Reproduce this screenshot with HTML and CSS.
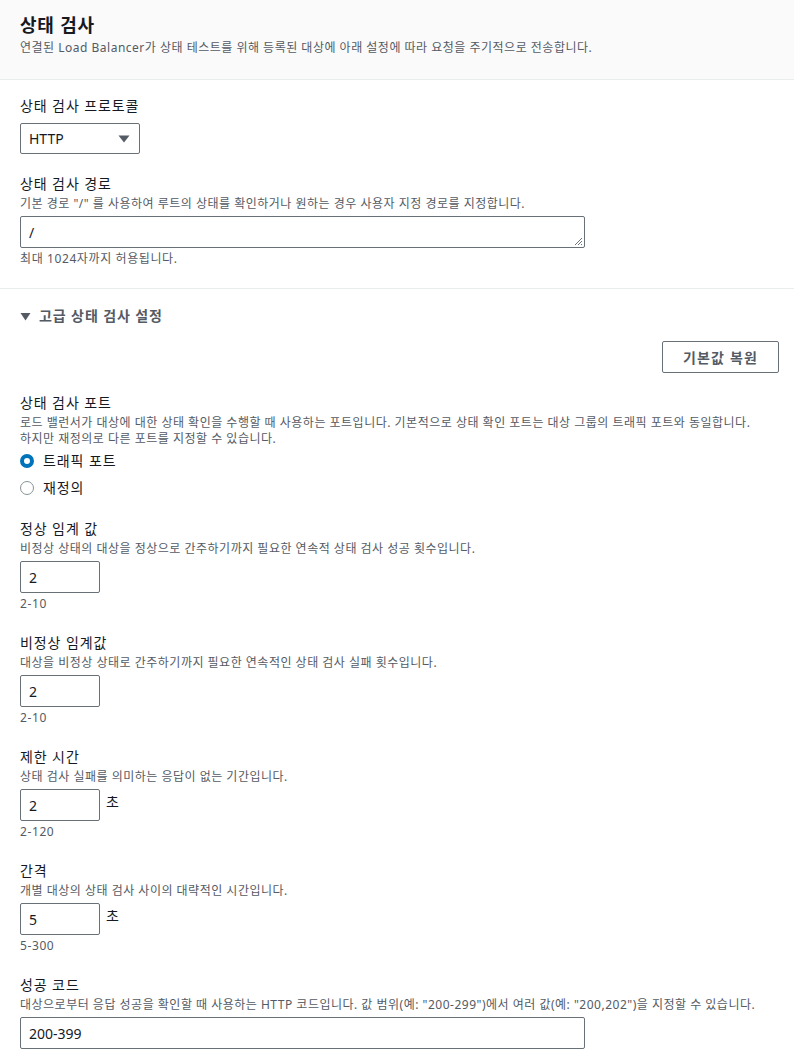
FILE: index.html
```html
<!DOCTYPE html>
<html lang="ko">
<head>
  <meta charset="UTF-8">
  <title>상태 검사</title>
  <link rel="stylesheet" href="styles.css">
</head>
<body>
  <div class="panel">
    <div class="panel-header">
      <h2>상태 검사</h2>
      <p class="desc">연결된 Load Balancer가 상태 테스트를 위해 등록된 대상에 아래 설정에 따라 요청을 주기적으로 전송합니다.</p>
    </div>

    <div class="panel-body">
      <div class="field">
        <label class="label">상태 검사 프로토콜</label>
        <div class="select">
          <span>HTTP</span>
          <svg width="12" height="8" viewBox="0 0 12 8"><path d="M0.5 0.5h11L6 7.5z" fill="#545b64"/></svg>
        </div>
      </div>

      <div class="field">
        <label class="label">상태 검사 경로</label>
        <p class="desc">기본 경로 "/" 를 사용하여 루트의 상태를 확인하거나 원하는 경우 사용자 지정 경로를 지정합니다.</p>
        <div class="input wide textarea">
          <span>/</span>
          <svg class="grip" width="9" height="9" viewBox="0 0 9 9"><path d="M8 1L1 8M8 4L4 8M8 7L7 8" stroke="#687078" stroke-width="1"/></svg>
        </div>
        <p class="hint">최대 1024자까지 허용됩니다.</p>
      </div>
    </div>

    <div class="advanced">
      <div class="expander">
        <svg width="11" height="9" viewBox="0 0 11 9"><path d="M0.5 1h10L5.5 8.5z" fill="#545b64"/></svg>
        <span>고급 상태 검사 설정</span>
      </div>

      <div class="actions">
        <button class="btn">기본값 복원</button>
      </div>

      <div class="field">
        <label class="label">상태 검사 포트</label>
        <p class="desc">로드 밸런서가 대상에 대한 상태 확인을 수행할 때 사용하는 포트입니다. 기본적으로 상태 확인 포트는 대상 그룹의 트래픽 포트와 동일합니다.<br>하지만 재정의로 다른 포트를 지정할 수 있습니다.</p>
        <div class="radios">
          <div class="radio checked"><span class="dot"></span>트래픽 포트</div>
          <div class="radio"><span class="dot"></span>재정의</div>
        </div>
      </div>

      <div class="field">
        <label class="label">정상 임계 값</label>
        <p class="desc">비정상 상태의 대상을 정상으로 간주하기까지 필요한 연속적 상태 검사 성공 횟수입니다.</p>
        <div class="input small">2</div>
        <p class="hint">2-10</p>
      </div>

      <div class="field">
        <label class="label">비정상 임계값</label>
        <p class="desc">대상을 비정상 상태로 간주하기까지 필요한 연속적인 상태 검사 실패 횟수입니다.</p>
        <div class="input small">2</div>
        <p class="hint">2-10</p>
      </div>

      <div class="field">
        <label class="label">제한 시간</label>
        <p class="desc">상태 검사 실패를 의미하는 응답이 없는 기간입니다.</p>
        <div class="row">
          <div class="input small">2</div>
          <span class="unit">초</span>
        </div>
        <p class="hint">2-120</p>
      </div>

      <div class="field">
        <label class="label">간격</label>
        <p class="desc">개별 대상의 상태 검사 사이의 대략적인 시간입니다.</p>
        <div class="row">
          <div class="input small">5</div>
          <span class="unit">초</span>
        </div>
        <p class="hint">5-300</p>
      </div>

      <div class="field">
        <label class="label">성공 코드</label>
        <p class="desc">대상으로부터 응답 성공을 확인할 때 사용하는 HTTP 코드입니다. 값 범위(예: "200-299")에서 여러 값(예: "200,202")을 지정할 수 있습니다.</p>
        <div class="input wide">200-399</div>
      </div>
    </div>
  </div>
</body>
</html>
```

FILE: styles.css
```css
:root {
  --text: #16191f;
  --muted: #545b64;
  --border: #687078;
  --line: #eaeded;
  --accent: #0073bb;
}

body {
  margin: 0;
  font-family: "Noto Sans", "Noto Sans CJK KR", sans-serif;
  color: var(--text);
  background: #fff;
}

p {
  margin: 0;
}

.panel-header {
  background: #fafafa;
  border-bottom: 1px solid var(--line);
  padding: 12px 20px 23px;
}

.panel-header h2 {
  margin: 0;
  font-size: 18px;
  font-weight: bold;
  line-height: 26px;
  letter-spacing: 0.8px;
}

.desc {
  font-size: 12px;
  line-height: 16px;
  margin-top: 2px;
  color: var(--muted);
  letter-spacing: 0.5px;
}

.hint {
  font-size: 12px;
  line-height: 16px;
  color: var(--muted);
  margin-top: 3px;
  letter-spacing: 0.6px;
}

.label {
  display: block;
  font-size: 14px;
  line-height: 20px;
  letter-spacing: 0.9px;
}

.panel-body {
  padding: 16px 20px 21px;
  border-bottom: 1px solid var(--line);
}

.field {
  margin-bottom: 21px;
}

.field:last-child {
  margin-bottom: 0;
}

.select-field {
  margin-bottom: 20px;
}

.field .desc {
  margin-bottom: 4px;
}

.select {
  margin: 7px 0 20px;
  width: 120px;
  height: 31px;
  border: 1px solid var(--border);
  border-radius: 2px;
  display: flex;
  align-items: center;
  justify-content: space-between;
  padding: 0 9px 0 8px;
  box-sizing: border-box;
  font-size: 14px;
}

.panel-body .field:first-child {
  margin-bottom: 0;
}

.input {
  height: 32px;
  border: 1px solid var(--border);
  border-radius: 2px;
  box-sizing: border-box;
  padding: 0 8px;
  display: flex;
  align-items: center;
  font-size: 14px;
}

.input.wide {
  width: 565px;
}

.input.small {
  width: 80px;
}

.textarea {
  position: relative;
}

.textarea .grip {
  position: absolute;
  right: 1px;
  bottom: 1px;
}

.advanced {
  padding: 17px 20px 20px;
}

.expander {
  display: flex;
  align-items: center;
  gap: 8px;
  font-size: 14px;
  font-weight: bold;
  color: var(--muted);
  line-height: 20px;
  letter-spacing: 0.9px;
}

.actions {
  display: flex;
  justify-content: flex-end;
  margin: 15px -5px 20px 0;
}

.btn {
  font-family: inherit;
  font-size: 14px;
  font-weight: bold;
  letter-spacing: 1.2px;
  color: var(--muted);
  background: #fff;
  border: 1px solid var(--border);
  border-radius: 2px;
  width: 117px;
  height: 32px;
  padding: 0;
}

.radios {
  display: flex;
  flex-direction: column;
  gap: 7px;
  margin-top: 4px;
}

.radio {
  display: flex;
  align-items: center;
  gap: 9px;
  font-size: 14px;
  line-height: 20px;
  letter-spacing: 0.9px;
}

.dot {
  width: 14px;
  height: 14px;
  border-radius: 50%;
  border: 1px solid #879596;
  box-sizing: border-box;
}

.radio.checked .dot {
  border: 4px solid var(--accent);
}

.row {
  display: flex;
  align-items: flex-start;
  gap: 6px;
}

.unit {
  font-size: 14px;
  line-height: 26px;
}
```
